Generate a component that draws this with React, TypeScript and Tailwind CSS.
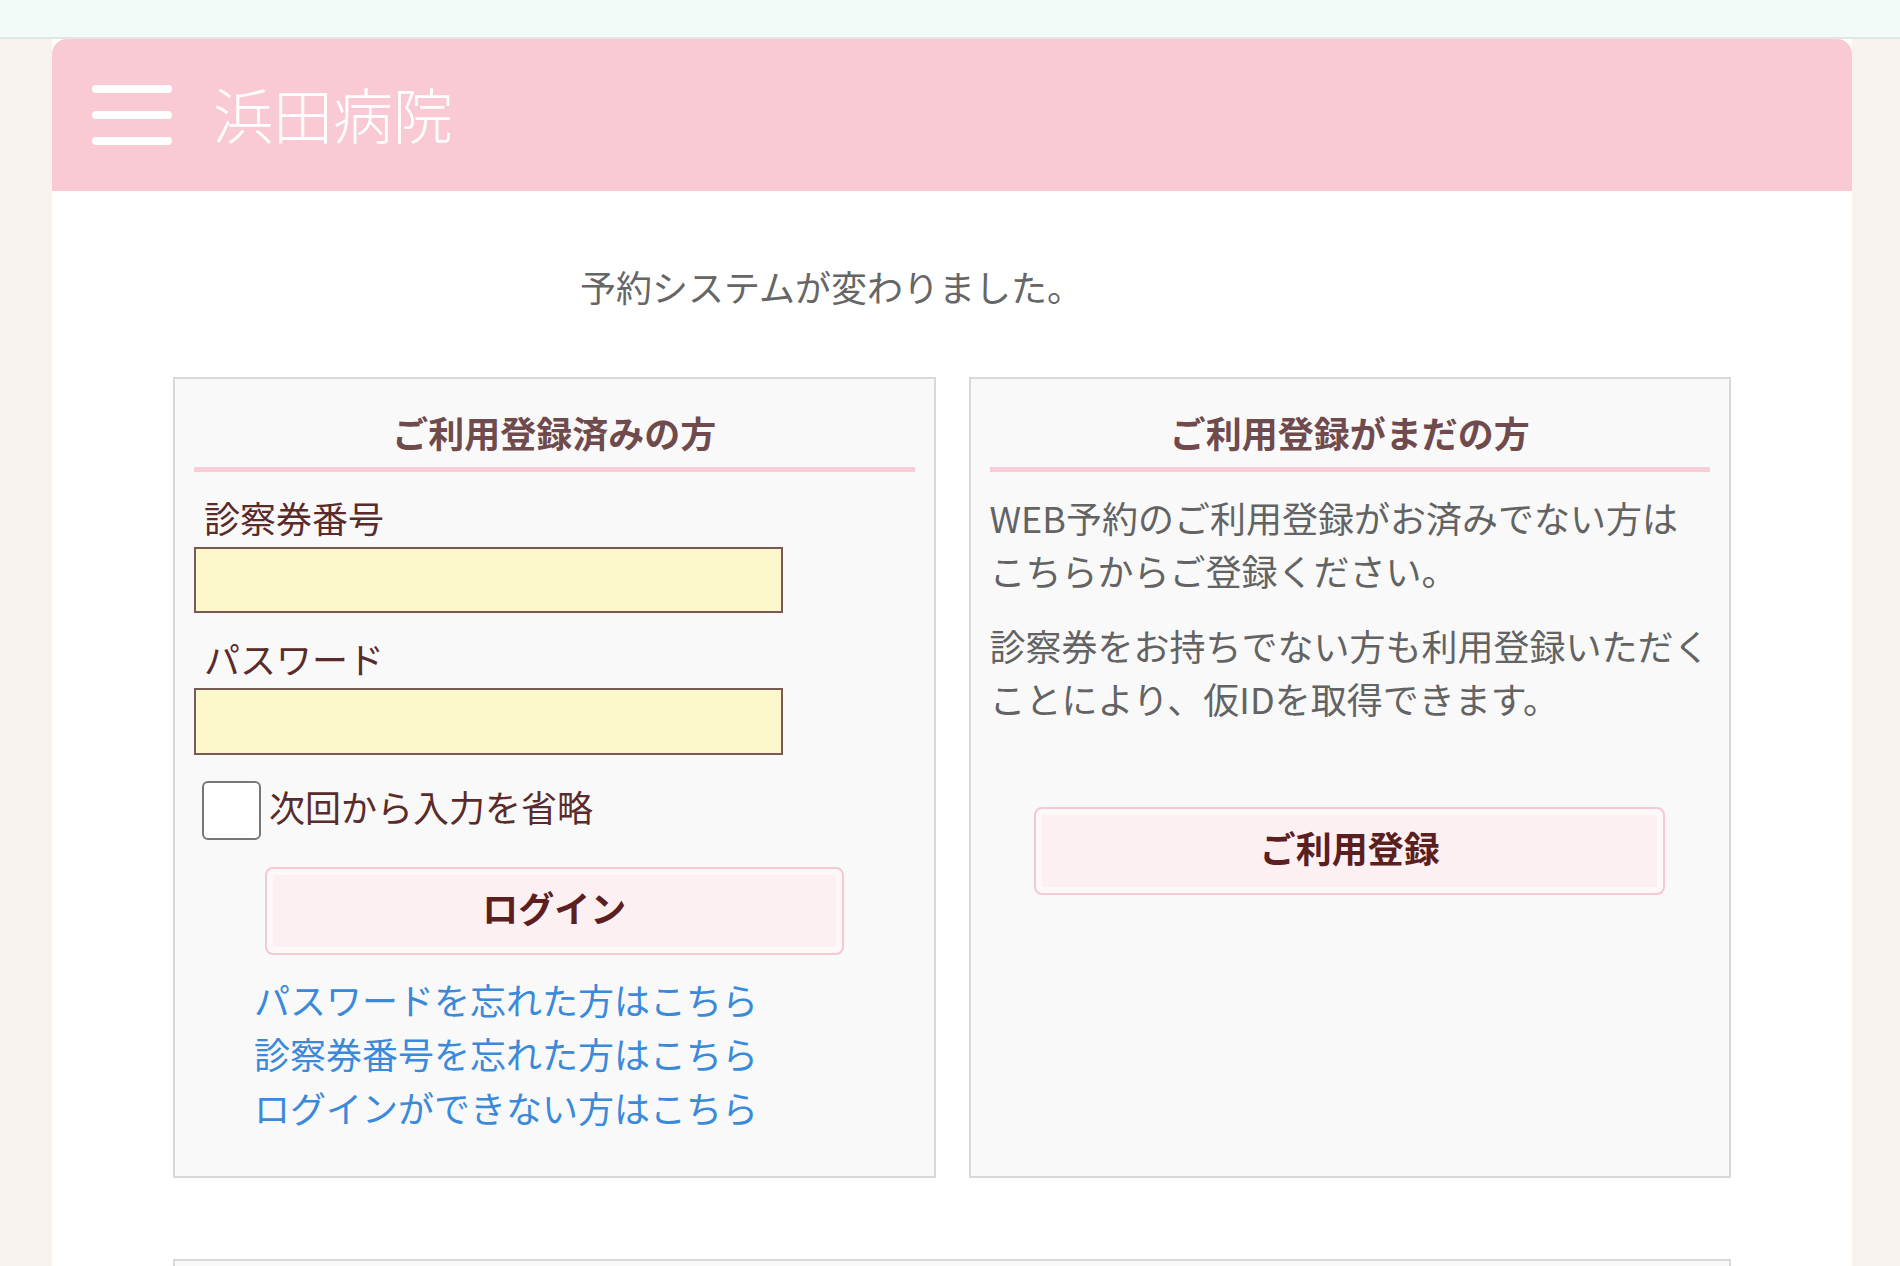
import { useState } from "react";

const font = "font-['Noto_Sans_CJK_JP','Noto_Sans',sans-serif]";

function Hamburger() {
  return (
    <div className="flex w-[80px] flex-col gap-[18px]">
      <span className="block h-[8px] rounded-full bg-white" />
      <span className="block h-[8px] rounded-full bg-white" />
      <span className="block h-[8px] rounded-full bg-white" />
    </div>
  );
}

function PanelHeading({ children }: { children: React.ReactNode }) {
  return (
    <h2 className="border-b-[5px] border-[#f8cdd8] pb-[9px] text-center text-[36px] font-bold leading-[52px] text-[#6f4b4d]">
      {children}
    </h2>
  );
}

function PinkButton({ label, width }: { label: string; width: string }) {
  return (
    <button
      className={`mx-auto flex h-[88px] ${width} items-center justify-center rounded-[8px] border-2 border-[#f4c9d2] bg-[#fdf0f2] pb-[8px] text-[36px] font-bold text-[#5b1f1f] shadow-[inset_0_0_0_6px_#fef8f9]`}
    >
      {label}
    </button>
  );
}

export default function App() {
  const [remember, setRemember] = useState(false);

  return (
    <div className={`min-h-screen bg-[#f8f3ee] ${font}`}>
      {/* browser-ish top strip */}
      <div className="h-[39px] border-b-2 border-[#e2e6e4] bg-[#f2fbf8]" />

      <div className="ml-[52px] w-[1800px] bg-white">
        {/* Header */}
        <header className="flex h-[152px] items-center gap-[41px] rounded-t-[15px] bg-[#f9c9d4] pl-[40px]">
          <Hamburger />
          <h1 className="pb-[4px] text-[60px] font-light leading-none text-white">浜田病院</h1>
        </header>

        <main className="px-[121px] pb-[40px] pt-[69px]">
          <p className="pl-[407px] text-[36px] leading-[52px] text-[#666666]">
            予約システムが変わりました。
          </p>

          <div className="mt-[65px] grid grid-cols-2 gap-[33px]">
            {/* Registered users */}
            <section className="border-2 border-[#d9d9d9] bg-[#f9f9f9] px-[19px] pb-[40px] pt-[27px]">
              <PanelHeading>ご利用登録済みの方</PanelHeading>

              <label className="mt-[19px] block pl-[10px] text-[36px] leading-[52px] text-[#5a2b2b]">
                診察券番号
              </label>
              <input
                type="text"
                className="mt-[4px] block h-[66px] w-[589px] border-2 border-[#7b5a55] bg-[#fcf8cc] px-3 text-[32px] outline-none"
              />

              <label className="mt-[19px] block pl-[10px] text-[36px] leading-[52px] text-[#5a2b2b]">
                パスワード
              </label>
              <input
                type="password"
                className="mt-[4px] block h-[67px] w-[589px] border-2 border-[#7b5a55] bg-[#fcf8cc] px-3 text-[32px] outline-none"
              />

              <label className="mt-[26px] flex cursor-pointer items-center gap-[8px] pl-[8px]">
                <span
                  onClick={() => setRemember(!remember)}
                  className="flex h-[59px] w-[59px] items-center justify-center rounded-[6px] border-2 border-[#777777] bg-white text-[36px] text-[#5a2b2b]"
                >
                  {remember ? "✓" : ""}
                </span>
                <span className="pb-[10px] text-[36px] leading-[44px] text-[#5a2b2b]">次回から入力を省略</span>
              </label>

              <div className="mt-[27px]">
                <PinkButton label="ログイン" width="w-[579px]" />
              </div>

              <div className="mt-[17px] flex flex-col pb-[2px] pl-[60px] text-[36px] leading-[54px] text-[#3b8ad9]">
                <a href="#">パスワードを忘れた方はこちら</a>
                <a href="#">診察券番号を忘れた方はこちら</a>
                <a href="#">ログインができない方はこちら</a>
              </div>
            </section>

            {/* Not yet registered */}
            <section className="border-2 border-[#d9d9d9] bg-[#f9f9f9] px-[19px] pb-[40px] pt-[27px]">
              <PanelHeading>ご利用登録がまだの方</PanelHeading>

              <p className="mt-[19px] text-[36px] leading-[53px] text-[#636363]">
                WEB予約のご利用登録がお済みでない方は
                <br />
                こちらからご登録ください。
              </p>
              <p className="mt-[22px] text-[36px] leading-[53px] text-[#636363]">
                診察券をお持ちでない方も利用登録いただく
                <br />
                ことにより、仮IDを取得できます。
              </p>

              <div className="mt-[82px]">
                <PinkButton label="ご利用登録" width="w-[631px]" />
              </div>
            </section>
          </div>

          <section className="mt-[81px] h-[200px] border-2 border-[#d9d9d9] bg-[#f9f9f9]" />
        </main>
      </div>
    </div>
  );
}
